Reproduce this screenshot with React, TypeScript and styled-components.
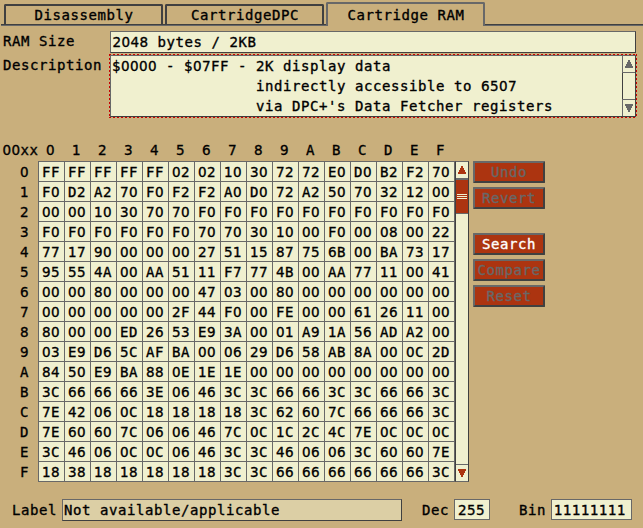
import React from "react";
import styled, { createGlobalStyle, css } from "styled-components";

const c = {
  bg: "#c9af7c",
  field: "#f0f0cf",
  readOnly: "#dccfa5",
  light: "#686868",
  dark: "#404040",
  accent: "#ac3410",
  focus: "#c80000",
};

const Global = createGlobalStyle`
  * { box-sizing: border-box; }
  body { margin: 0; background: ${c.bg}; }
`;

const Page = styled.main`
  width: 643px;
  height: 528px;
  overflow: hidden;
  display: flex;
  flex-direction: column;
  background: ${c.bg};
  color: #000;
  font-family: "DejaVu Sans Mono", monospace;
  font-size: 14px;
  line-height: 20px;
  letter-spacing: 0.572px;
  -webkit-text-stroke: 0.35px currentColor;
  white-space: pre;
`;

const Digits = styled.span`
  font-family: "DejaVu Sans", sans-serif;
  font-size: 13.5px;
  line-height: 1;
  letter-spacing: 0.41px;
`;

/* Digit runs use the face whose zero has no inner mark. */
const Mono = ({ children }: { children: string }) => (
  <>
    {children.split(/(\d+)/).map((part, i) => (i % 2 ? <Digits key={i}>{part}</Digits> : part))}
  </>
);

const bevel = css`
  border: 1px solid ${c.light};
  border-right-color: ${c.dark};
  border-bottom-color: ${c.dark};
`;

const TabBar = styled.nav`
  flex: none;
  height: 26px;
  margin-left: 1px;
  padding-left: 3px;
  display: flex;
  align-items: flex-end;
  gap: 2px;
  background: linear-gradient(${c.dark} 50%, ${c.light} 50%) bottom / 100% 2px no-repeat;
`;

const Tab = styled.button<{ $active?: boolean }>`
  width: 159px;
  height: ${(p) => (p.$active ? 24 : 20)}px;
  margin: 0 0 ${(p) => (p.$active ? 0 : 2)}px;
  padding: 0 0 0 1px;
  border: 2px solid ${(p) => (p.$active ? c.light : c.dark)};
  border-bottom: 0;
  border-radius: 2px 2px 0 0;
  background: ${c.bg};
  color: inherit;
  font: inherit;
  letter-spacing: inherit;
  text-align: center;
  line-height: ${(p) => (p.$active ? 19 : 17)}px;
`;

const Details = styled.section`
  flex: none;
  height: 114px;
  padding: 5px 0 0 3px;
  display: grid;
  grid-template-columns: 106px 528px;
  grid-template-rows: 23px 64px;
  align-items: start;
`;

const DetailLabel = styled.label<{ $drop?: number }>`
  padding-top: ${(p) => p.$drop ?? 0}px;
`;

const Field = styled.div`
  ${bevel}
  height: 22px;
  margin: 0 1px;
  padding: 0 1.5px;
  background: ${c.field};
`;

const FocusFrame = styled.div`
  height: 64px;
  padding: 1px;
  background:
    repeating-linear-gradient(90deg, ${c.focus} 0 2px, transparent 2px 4px) top / 100% 1px no-repeat,
    repeating-linear-gradient(90deg, ${c.focus} 0 2px, transparent 2px 4px) bottom / 100% 1px no-repeat,
    repeating-linear-gradient(${c.focus} 0 2px, transparent 2px 4px) left / 1px 100% no-repeat,
    repeating-linear-gradient(${c.focus} 0 2px, transparent 2px 4px) right / 1px 100% no-repeat;
`;

const TextBox = styled.div`
  height: 62px;
  display: flex;
  background: ${c.field};
  ${bevel}
`;

const TextLines = styled.div`
  flex: 1;
  padding-left: 1px;
`;

const TextScroll = styled.div`
  width: 13px;
  display: grid;
  grid-template-rows: 17px 1fr 17px;
`;

const ScrollCap = styled.div<{ $end?: boolean }>`
  display: flex;
  justify-content: center;
  align-items: center;
  border-left: 1px solid ${c.light};
  border-bottom: ${(p) => (p.$end ? 0 : 1)}px solid ${c.light};
  border-top: ${(p) => (p.$end ? 1 : 0)}px solid ${c.light};
`;

const ScrollTrack = styled.div`
  border-left: 1px solid ${c.dark};
`;

const Arrow = ({ down, color }: { down?: boolean; color: string }) => (
  <svg width="8" height="8" viewBox="0 0 8 8" shapeRendering="crispEdges">
    <path
      fill={color}
      transform={down ? "matrix(1 0 0 -1 0 8)" : undefined}
      d="M3 0h2v2h1v2h1v2h1v2H0V6h1V4h1V2h1z"
    />
  </svg>
);

const Memory = styled.section`
  flex: none;
  height: 359px;
  display: flex;
`;

const Dump = styled.div`
  width: 455px;
`;

const HeaderRow = styled.div`
  height: 21px;
  display: grid;
  grid-template-columns: 38px repeat(16, 26px);
`;

const Corner = styled.span`
  padding-left: 2.5px;
`;

const ColumnName = styled.span`
  padding-left: 8px;
`;

const Row = styled.div`
  height: 20px;
  display: grid;
  grid-template-columns: 38px repeat(16, 26px) 1px;
`;

const RowName = styled.span`
  padding-left: 20px;
  line-height: 22px;
`;

const Byte = styled.span`
  height: 21px;
  padding-left: 3px;
  border: 1px solid ${c.light};
  border-right-width: 0;
  background: ${c.field};
`;

const Edge = styled.span`
  height: 21px;
  background: ${c.light};
`;

const ScrollBar = styled.div`
  width: 14px;
  height: 321px;
  margin-top: 21px;
  display: flex;
  flex-direction: column;
  background: ${c.field};
  border: 1px solid ${c.light};
  border-left-color: ${c.dark};
  border-right-color: ${c.dark};
`;

const BarCap = styled.div<{ $end?: boolean }>`
  flex: none;
  height: ${(p) => (p.$end ? 17 : 16)}px;
  display: flex;
  align-items: center;
  justify-content: center;
  border-top: ${(p) => (p.$end ? 1 : 0)}px solid ${c.light};
`;

const Thumb = styled.div`
  flex: none;
  height: 36px;
  margin-bottom: auto;
  padding: 14px 1px 0;
  border-top: 2px solid ${c.light};
  border-bottom: 1px solid ${c.light};
  background: ${c.accent};
`;

const Grip = styled.div`
  height: 1px;
  margin-bottom: 1px;
  background: ${c.field};
`;

const Actions = styled.div`
  width: 72px;
  margin: 21px 0 0 4px;
  display: flex;
  flex-direction: column;
  gap: 4px;
`;

const Action = styled.button<{ $enabled?: boolean; $group?: boolean }>`
  height: 22px;
  flex: none;
  margin: ${(p) => (p.$group ? 20 : 0)}px 0 0;
  padding: 0;
  border: 2px solid ${c.light};
  border-right-color: ${c.dark};
  border-bottom-color: ${c.dark};
  border-radius: 1px;
  background: ${c.accent};
  color: ${(p) => (p.$enabled ? "#fff" : c.light)};
  font: inherit;
  letter-spacing: inherit;
  line-height: 18px;
`;

const Footer = styled.footer`
  flex: none;
  display: flex;
  align-items: flex-start;
  padding-left: 12px;
`;

const FooterLabel = styled.label<{ $width: number }>`
  width: ${(p) => p.$width}px;
  padding-top: 1px;
`;

const Value = styled.div<{ $width: number; $gap?: number; $pad: number }>`
  width: ${(p) => p.$width}px;
  height: 21px;
  margin-right: ${(p) => p.$gap ?? 0}px;
  padding-left: ${(p) => p.$pad}px;
  border: 1px solid ${c.light};
  background: ${c.field};
`;

const LabelValue = styled(Value)`
  ${bevel}
  height: 22px;
  background: ${c.readOnly};
`;

const HEX = "0123456789ABCDEF".split("");

const MEMORY = [
  "FF FF FF FF FF 02 02 10 30 72 72 E0 D0 B2 F2 70",
  "F0 D2 A2 70 F0 F2 F2 A0 D0 72 A2 50 70 32 12 00",
  "00 00 10 30 70 70 F0 F0 F0 F0 F0 F0 F0 F0 F0 F0",
  "F0 F0 F0 F0 F0 F0 70 70 30 10 00 F0 00 08 00 22",
  "77 17 90 00 00 00 27 51 15 87 75 6B 00 BA 73 17",
  "95 55 4A 00 AA 51 11 F7 77 4B 00 AA 77 11 00 41",
  "00 00 80 00 00 00 47 03 00 80 00 00 00 00 00 00",
  "00 00 00 00 00 2F 44 F0 00 FE 00 00 61 26 11 00",
  "80 00 00 ED 26 53 E9 3A 00 01 A9 1A 56 AD A2 00",
  "03 E9 D6 5C AF BA 00 06 29 D6 58 AB 8A 00 0C 2D",
  "84 50 E9 BA 88 0E 1E 1E 00 00 00 00 00 00 00 00",
  "3C 66 66 66 3E 06 46 3C 3C 66 66 3C 3C 66 66 3C",
  "7E 42 06 0C 18 18 18 18 3C 62 60 7C 66 66 66 3C",
  "7E 60 60 7C 06 06 46 7C 0C 1C 2C 4C 7E 0C 0C 0C",
  "3C 46 06 0C 0C 06 46 3C 3C 46 06 06 3C 60 60 7E",
  "18 38 18 18 18 18 18 3C 3C 66 66 66 66 66 66 3C",
].map((row) => row.split(" "));

const DESCRIPTION = [
  "$0000 - $07FF - 2K display data",
  "                indirectly accessible to 6507",
  "                via DPC+'s Data Fetcher registers",
];

export default function App() {
  return (
    <>
      <Global />
      <Page>
        <TabBar>
          <Tab>Disassembly</Tab>
          <Tab>CartridgeDPC</Tab>
          <Tab $active>Cartridge RAM</Tab>
        </TabBar>

        <Details>
          <DetailLabel>RAM Size</DetailLabel>
          <Field>
            <Mono>2048 bytes / 2KB</Mono>
          </Field>
          <DetailLabel $drop={1}>Description</DetailLabel>
          <FocusFrame>
            <TextBox>
              <TextLines>
                {DESCRIPTION.map((line) => (
                  <div key={line}>
                    <Mono>{line}</Mono>
                  </div>
                ))}
              </TextLines>
              <TextScroll>
                <ScrollCap>
                  <Arrow color={c.light} />
                </ScrollCap>
                <ScrollTrack />
                <ScrollCap $end>
                  <Arrow down color={c.light} />
                </ScrollCap>
              </TextScroll>
            </TextBox>
          </FocusFrame>
        </Details>

        <Memory>
          <Dump>
            <HeaderRow>
              <Corner>
                <Mono>00xx</Mono>
              </Corner>
              {HEX.map((h) => (
                <ColumnName key={h}>
                  <Mono>{h}</Mono>
                </ColumnName>
              ))}
            </HeaderRow>
            {MEMORY.map((row, r) => (
              <Row key={r}>
                <RowName>
                  <Mono>{HEX[r]}</Mono>
                </RowName>
                {row.map((byte, i) => (
                  <Byte key={i}>
                    <Mono>{byte}</Mono>
                  </Byte>
                ))}
                <Edge />
              </Row>
            ))}
          </Dump>
          <ScrollBar>
            <BarCap>
              <Arrow color={c.accent} />
            </BarCap>
            <Thumb>
              <Grip />
              <Grip />
              <Grip />
            </Thumb>
            <BarCap $end>
              <Arrow down color={c.accent} />
            </BarCap>
          </ScrollBar>
          <Actions>
            <Action>Undo</Action>
            <Action>Revert</Action>
            <Action $enabled $group>
              Search
            </Action>
            <Action>Compare</Action>
            <Action>Reset</Action>
          </Actions>
        </Memory>

        <Footer>
          <FooterLabel $width={50}>Label</FooterLabel>
          <LabelValue $width={340} $pad={1} $gap={20}>
            Not available/applicable
          </LabelValue>
          <FooterLabel $width={32}>Dec</FooterLabel>
          <Value $width={36} $pad={3} $gap={29}>
            <Mono>255</Mono>
          </Value>
          <FooterLabel $width={32}>Bin</FooterLabel>
          <Value $width={81} $pad={2}>
            <Mono>11111111</Mono>
          </Value>
        </Footer>
      </Page>
    </>
  );
}
